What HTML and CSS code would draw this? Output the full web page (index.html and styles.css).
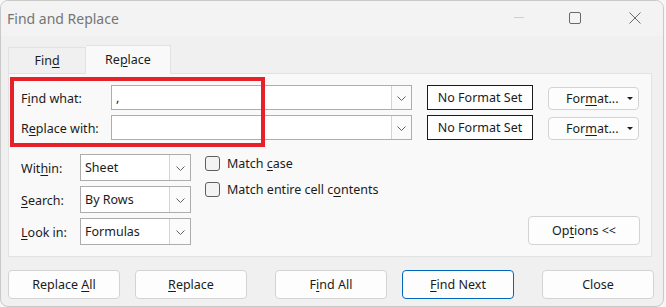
FILE: index.html
```html
<!DOCTYPE html>
<html lang="en">
<head>
  <meta charset="UTF-8">
  <title>Find and Replace</title>
  <link rel="stylesheet" href="styles.css">
</head>
<body>
  <div class="window">
    <!-- Title bar -->
    <div class="titlebar">
      <span class="title">Find and Replace</span>
      <div class="controls">
        <svg class="ctl min" width="10" height="1" viewBox="0 0 10 1"><line x1="0" y1="0.5" x2="10" y2="0.5" stroke="#cfcfcf"/></svg>
        <svg class="ctl max" width="12" height="12" viewBox="0 0 12 12"><rect x="0.5" y="0.5" width="11" height="11" rx="1.5" fill="none" stroke="#6a6a6a"/></svg>
        <svg class="ctl close" width="12" height="12" viewBox="0 0 12 12"><path d="M0.5 0.5 L11.5 11.5 M11.5 0.5 L0.5 11.5" stroke="#6a6a6a" fill="none"/></svg>
      </div>
    </div>

    <div class="content">
      <div class="tabs">
        <div class="tab">Fin<u>d</u></div>
        <div class="tab active">Re<u>p</u>lace</div>
      </div>

      <div class="panel">
        <div class="row">
          <label class="lbl">F<u>i</u>nd what:</label>
          <div class="combo wide"><span class="val">,</span><span class="drop"><svg width="9" height="5" viewBox="0 0 9 5"><polyline points="0.5,0.5 4.5,4.5 8.5,0.5" fill="none" stroke="#606060"/></svg></span></div>
          <div class="fmt-box">No Format Set</div>
          <button class="fmt-btn"><span>For<u>m</u>at...</span><span class="tri"></span></button>
        </div>
        <div class="row second">
          <label class="lbl">R<u>e</u>place with:</label>
          <div class="combo wide"><span class="val"></span><span class="drop"><svg width="9" height="5" viewBox="0 0 9 5"><polyline points="0.5,0.5 4.5,4.5 8.5,0.5" fill="none" stroke="#606060"/></svg></span></div>
          <div class="fmt-box">No Format Set</div>
          <button class="fmt-btn"><span>For<u>m</u>at...</span><span class="tri"></span></button>
        </div>

        <div class="lower">
          <div class="opts">
            <label class="lbl small">Wit<u>h</u>in:</label>
            <div class="combo sel"><span class="val">Sheet</span><span class="drop"><svg width="9" height="5" viewBox="0 0 9 5"><polyline points="0.5,0.5 4.5,4.5 8.5,0.5" fill="none" stroke="#606060"/></svg></span></div>
            <label class="lbl small"><u>S</u>earch:</label>
            <div class="combo sel"><span class="val">By Rows</span><span class="drop"><svg width="9" height="5" viewBox="0 0 9 5"><polyline points="0.5,0.5 4.5,4.5 8.5,0.5" fill="none" stroke="#606060"/></svg></span></div>
            <label class="lbl small"><u>L</u>ook in:</label>
            <div class="combo sel"><span class="val">Formulas</span><span class="drop"><svg width="9" height="5" viewBox="0 0 9 5"><polyline points="0.5,0.5 4.5,4.5 8.5,0.5" fill="none" stroke="#606060"/></svg></span></div>
          </div>
          <div class="checks">
            <div class="check"><span class="box"></span><span>Match <u>c</u>ase</span></div>
            <div class="check"><span class="box"></span><span>Match entire cell c<u>o</u>ntents</span></div>
          </div>
          <button class="btn options">Op<u>t</u>ions &lt;&lt;</button>
        </div>
      </div>

      <div class="actions">
        <button class="btn act">Replace <u>A</u>ll</button>
        <button class="btn act gap-s"><u>R</u>eplace</button>
        <button class="btn act gap-l">F<u>i</u>nd All</button>
        <button class="btn act gap-s primary"><u>F</u>ind Next</button>
        <button class="btn act gap-l">Close</button>
      </div>
    </div>

    <div class="highlight"></div>
  </div>
</body>
</html>
```

FILE: styles.css
```css
* {
  margin: 0;
  padding: 0;
  box-sizing: border-box;
}

body {
  font-family: 'Noto Sans', sans-serif;
  font-size: 12.5px;
  color: #1b1b1b;
  background: #f7f7f7;
  width: 666px;
  height: 307px;
  overflow: hidden;
}

u {
  text-decoration-thickness: 1px;
  text-underline-offset: 2px;
}

.window {
  position: relative;
  width: 664px;
  height: 307px;
  background: #f0f0f0;
  border: 1px solid #c9c9c9;
  border-radius: 8px;
  overflow: hidden;
}

/* Title bar */
.titlebar {
  height: 35px;
  background: #f3f3f3;
  display: flex;
  align-items: center;
  justify-content: space-between;
  padding-left: 6px;
}

.title {
  font-size: 14px;
  color: #757575;
  margin-top: -1px;
}

.controls {
  display: flex;
  align-items: center;
  height: 100%;
  margin-top: -2px;
}

.ctl.min {
  margin-right: 45px;
}

.ctl.max {
  margin-right: 48px;
}

.ctl.close {
  margin-right: 22px;
}

.content {
  padding: 9px 0 0 7px;
}

/* Tabs */
.tabs {
  display: flex;
  align-items: flex-end;
  height: 28px;
}

.tab {
  height: 26px;
  width: 78px;
  border: 1px solid #e2e2e2;
  border-bottom: none;
  background: #f0f0f0;
  text-align: center;
  line-height: 26px;
}

.tab.active {
  height: 29px;
  width: 85px;
  background: #f9f9f9;
  border-left: none;
  margin-bottom: -1px;
  position: relative;
  z-index: 1;
  line-height: 28px;
}

.panel {
  width: 644px;
  background: #f9f9f9;
  border: 1px solid #e2e2e2;
  padding: 11px 11px 11px 12px;
}

.row {
  display: flex;
  align-items: center;
  height: 25px;
}

.row.second {
  margin-top: 5px;
}

.lbl {
  width: 90px;
  flex: none;
  padding-top: 2px;
}

.lbl.small {
  width: 59px;
}

.combo {
  display: flex;
  background: #fff;
  border: 1px solid #adadad;
  height: 25px;
}

.combo.wide {
  width: 301px;
}

.combo .val {
  flex: 1;
  padding-left: 4px;
  line-height: 23px;
}

.combo .drop {
  width: 20px;
  flex: none;
  border-left: 1px solid #d4d4d4;
  background: #fbfbfb;
  display: flex;
  align-items: center;
  justify-content: center;
  padding-top: 1px;
}

.fmt-box {
  margin-left: 15px;
  width: 106px;
  height: 25px;
  border: 1px solid #1a1a1a;
  background: #fff;
  text-align: center;
  line-height: 23px;
}

.btn, .fmt-btn {
  font-family: inherit;
  font-size: 12.5px;
  color: #1b1b1b;
  background: #fdfdfd;
  border: 1px solid #d3d3d3;
  border-radius: 4px;
}

.fmt-btn {
  margin-left: 15px;
  margin-top: 2px;
  width: 91px;
  height: 23px;
  display: flex;
  align-items: center;
  padding: 0 5px 0 17px;
}

.fmt-btn .tri {
  width: 0;
  height: 0;
  margin-left: auto;
  border-left: 3px solid transparent;
  border-right: 3px solid transparent;
  border-top: 3px solid #1b1b1b;
}

/* Lower options */
.lower {
  display: flex;
  margin-top: 14px;
}

.opts {
  display: grid;
  grid-template-columns: 59px 111px;
  row-gap: 5px;
  align-items: center;
}

.combo.sel {
  height: 27px;
}

.combo.sel .val {
  line-height: 25px;
}

.combo.sel .drop {
  width: 21px;
}

.checks {
  margin-left: 14px;
  padding-top: 2px;
  display: flex;
  flex-direction: column;
  gap: 11px;
}

.check {
  display: flex;
  align-items: center;
  height: 15px;
}

.check .box {
  width: 15px;
  height: 15px;
  border: 1px solid #5f5f5f;
  border-radius: 3px;
  background: #f3f3f3;
  margin-right: 7px;
}

.options {
  margin-left: auto;
  align-self: flex-end;
  width: 112px;
  height: 29px;
}

/* Bottom buttons */
.actions {
  display: flex;
  margin-top: 13px;
}

.act {
  width: 112px;
  height: 29px;
}

.gap-s {
  margin-left: 15px;
}

.gap-l {
  margin-left: 28px;
}

.primary {
  border-color: #0067c0;
}

/* Red annotation box */
.highlight {
  position: absolute;
  left: 9px;
  top: 76px;
  width: 255px;
  height: 70px;
  border: 4px solid #e8202a;
}
```
